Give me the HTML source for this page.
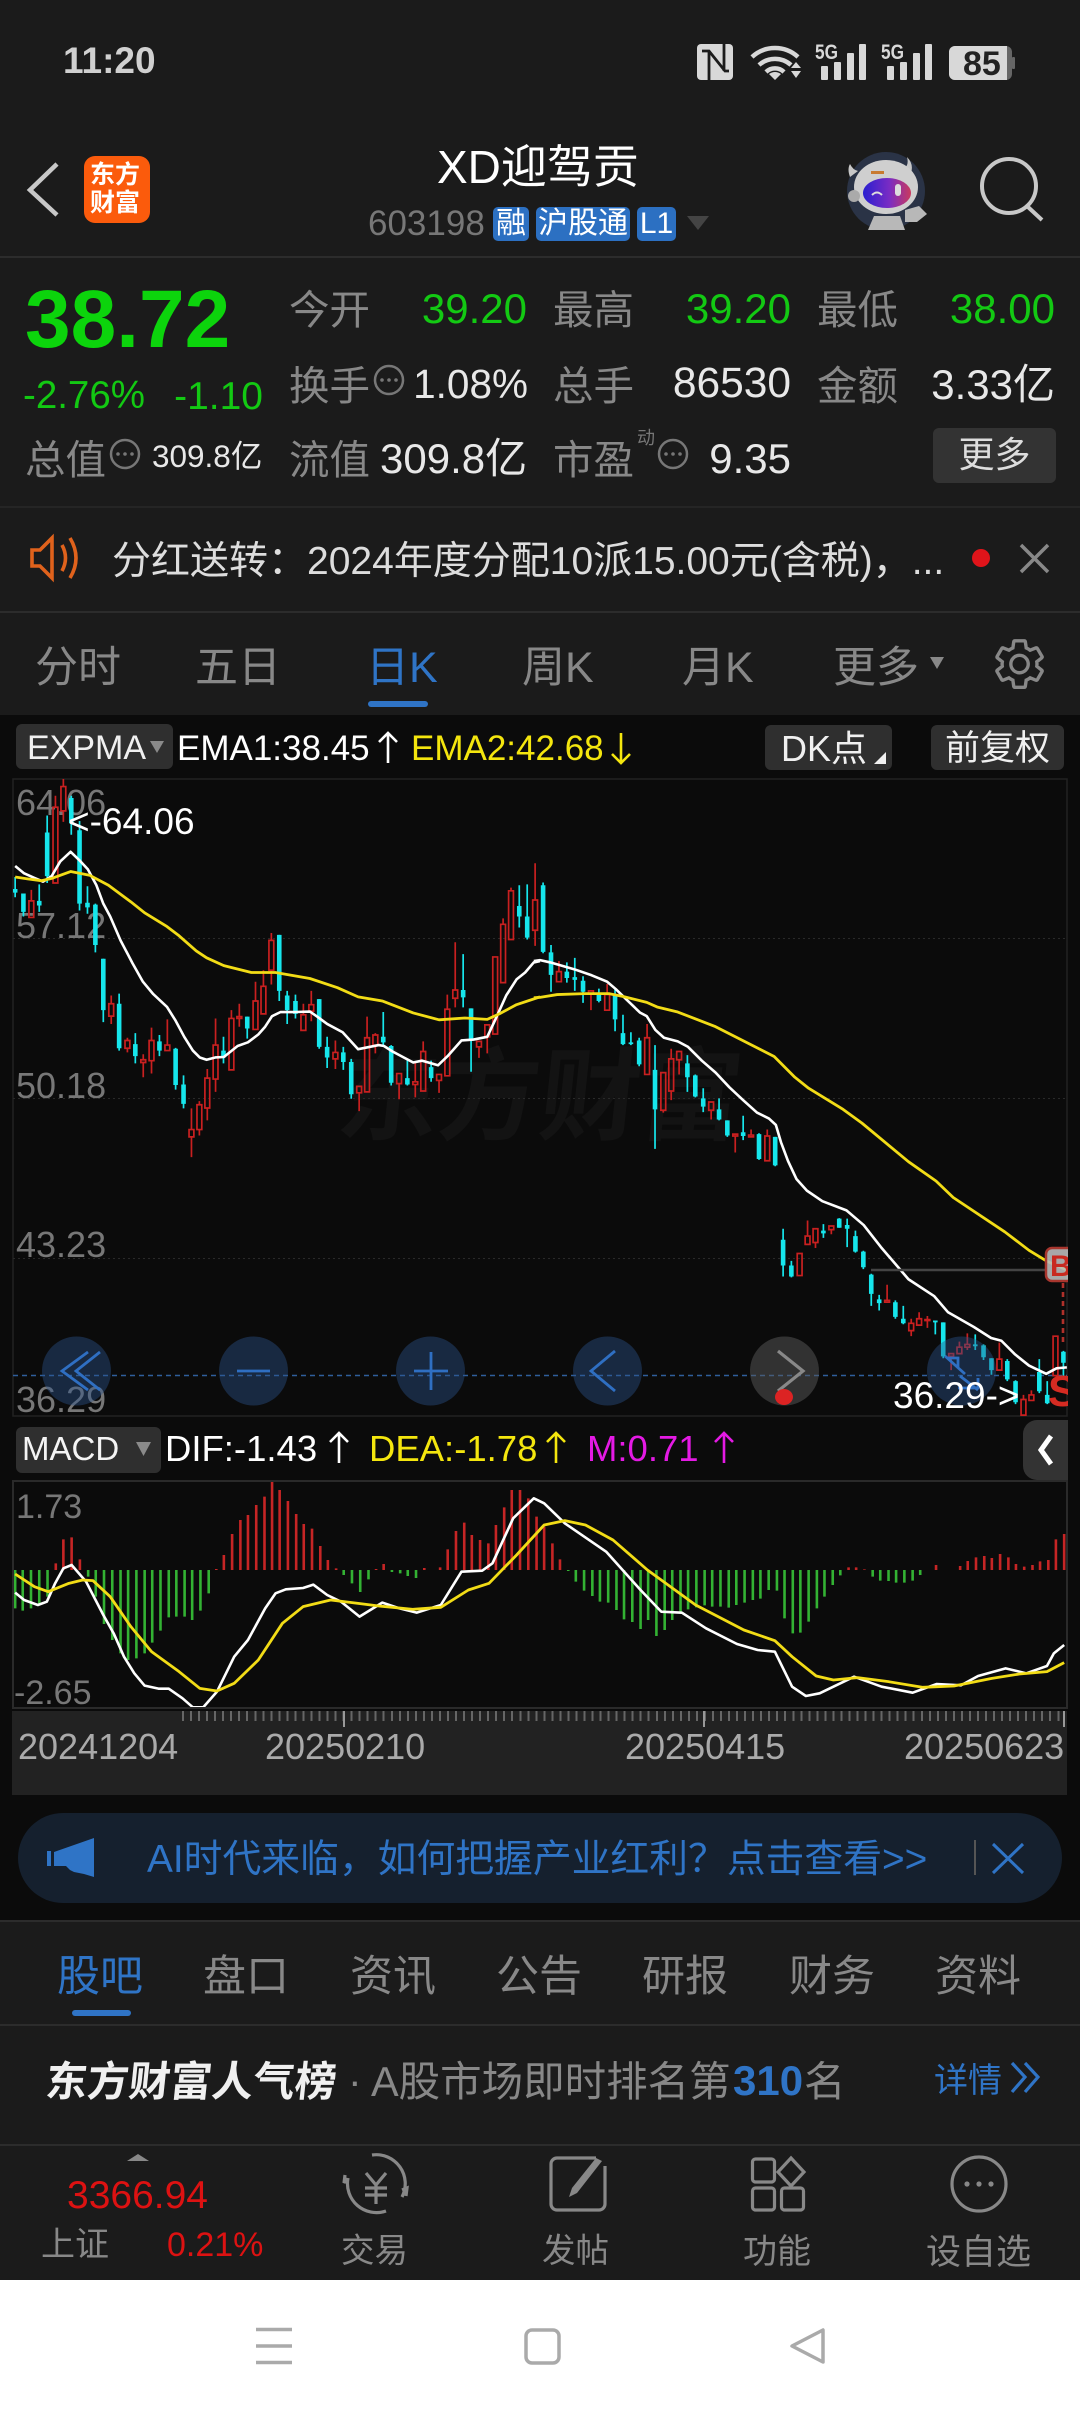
<!DOCTYPE html>
<html lang="zh"><head><meta charset="utf-8"><title>XD迎驾贡</title>
<style>
html,body{margin:0;padding:0;background:#1b1b1b}
#p{position:relative;width:1080px;height:2412px;overflow:hidden;background:#1b1b1b;font-family:"Liberation Sans","Noto Sans CJK SC",sans-serif;color:#888}
.t{position:absolute;white-space:nowrap;line-height:1}
.b{position:absolute}
svg{position:absolute;left:0;top:0}
.g{color:#13c913}.w{color:#e8e8e8}.y{color:#f4e60e}.bl{color:#2f74c6}
</style></head><body><div id="p">

<div class="b" style="left:0;top:715px;width:1080px;height:1205px;background:#0b0b0b"></div>
<div class="b" style="left:0;top:256px;width:1080px;height:2px;background:#2c2c2c"></div>
<div class="b" style="left:0;top:506px;width:1080px;height:2px;background:#252525"></div>
<div class="b" style="left:0;top:611px;width:1080px;height:2px;background:#2c2c2c"></div>
<div class="b" style="left:0;top:1920px;width:1080px;height:2px;background:#2c2c2c"></div>
<div class="b" style="left:0;top:2024px;width:1080px;height:2px;background:#2c2c2c"></div>
<div class="b" style="left:0;top:2144px;width:1080px;height:2px;background:#2c2c2c"></div>
<div class="b" style="left:0;top:2280px;width:1080px;height:132px;background:#fff"></div>

<!-- status bar -->
<span class="t" style="left:63px;top:42px;font-size:37px;font-weight:700;color:#d0d0d0">11:20</span>
<svg width="1080" height="260" viewBox="0 0 1080 260">
<rect x="697" y="44" width="36" height="36" rx="4" fill="#d8d8d8"/>
<path d="M702 51H709L725 71H729M709 51V80M724 44V71" fill="none" stroke="#1b1b1b" stroke-width="2.8"/>
<g fill="none" stroke="#d8d8d8" stroke-width="4.5"><path d="M752 57a34 34 0 0 1 46 0"/><path d="M759 65a24 24 0 0 1 32 0"/><path d="M766 72a13 13 0 0 1 18 0"/></g>
<path d="M769 74l6 6 6-6q-6-4-12 0zM791 68l5-6 5 6zM791 71l5 7 5-7z" fill="#d8d8d8"/>
<g fill="#d8d8d8"><rect x="821" y="66" width="7" height="14" rx="1"/><rect x="834" y="62" width="7" height="18" rx="1"/><rect x="847" y="53" width="7" height="27" rx="1"/><rect x="859" y="44" width="7" height="36" rx="1"/>
<rect x="887" y="66" width="7" height="14" rx="1"/><rect x="900" y="62" width="7" height="18" rx="1"/><rect x="913" y="53" width="7" height="27" rx="1"/><rect x="925" y="44" width="7" height="36" rx="1"/></g>
<text x="815" y="59" font-size="21" font-weight="700" fill="#d8d8d8" font-family="Liberation Sans" textLength="23" lengthAdjust="spacingAndGlyphs">5G</text>
<text x="881" y="59" font-size="21" font-weight="700" fill="#d8d8d8" font-family="Liberation Sans" textLength="23" lengthAdjust="spacingAndGlyphs">5G</text>
<rect x="949" y="46" width="63" height="34" rx="6" fill="#666"/><path d="M955 46h52v34h-52a6 6 0 0 1-6-6V52a6 6 0 0 1 6-6z" fill="#d8d8d8"/><rect x="1012" y="57" width="3" height="12" rx="1" fill="#666"/>
<text x="963" y="75" font-size="34" font-weight="700" fill="#222" font-family="Liberation Sans">85</text>
<!-- back -->
<path d="M57 164L30 190L57 215" fill="none" stroke="#c8c8c8" stroke-width="4.5"/>
<!-- logo -->
<rect x="84" y="156" width="66" height="67" rx="11" fill="#fb5b0c"/>
<!-- avatar -->
<circle cx="886" cy="191" r="39" fill="#2a3346"/>
<path d="M850 177q-3-8 0-13q3 6 8 7zM905 168q4-4 2-11q7 7 4 16z" fill="#c8c8c8"/>
<ellipse cx="886" cy="187" rx="32" ry="27" fill="#cfcfcf"/>
<circle cx="854" cy="196" r="6" fill="#aaa"/>
<defs><linearGradient id="vz" x1="0" x2="1"><stop offset="0" stop-color="#2a1fd0"/><stop offset=".55" stop-color="#7a2cc4"/><stop offset="1" stop-color="#c93a5e"/></linearGradient></defs>
<ellipse cx="887" cy="193" rx="24" ry="15" fill="url(#vz)"/>
<path d="M872 195q5-5 10 0" fill="none" stroke="#ddd" stroke-width="2"/><rect x="895" y="184" width="6" height="12" rx="3" fill="#ddd"/>
<rect x="871" y="171" width="13" height="3" fill="#c87a30"/>
<path d="M868 230l6-14h26l5 14zM905 210l14-4 8 8-10 8-12 0z" fill="#b8b8b8"/>
<!-- search -->
<circle cx="1009" cy="186" r="27" fill="none" stroke="#c8c8c8" stroke-width="4"/><path d="M1028 207L1042 220" stroke="#c8c8c8" stroke-width="4" fill="none"/>
<!-- tri -->
<path d="M687 216h22l-11 14z" fill="#444"/>
</svg>
<span class="t" style="left:90px;top:163px;font-size:25px;font-weight:700;color:#fff">东方</span>
<span class="t" style="left:90px;top:191px;font-size:25px;font-weight:700;color:#fff">财富</span>
<span class="t" style="left:437px;top:144px;font-size:46px;color:#fff">XD迎驾贡</span>
<span class="t" style="left:368px;top:206px;font-size:35px;color:#777">603198</span>
<span class="t" style="left:493px;top:207px;width:36px;height:34px;line-height:34px;text-align:center;background:#2c70c2;border-radius:5px;color:#fff;font-size:30px">融</span>
<span class="t" style="left:536px;top:207px;width:94px;height:34px;line-height:34px;text-align:center;background:#2c70c2;border-radius:5px;color:#fff;font-size:30px">沪股通</span>
<span class="t" style="left:637px;top:207px;width:39px;height:34px;line-height:34px;text-align:center;background:#2c70c2;border-radius:5px;color:#fff;font-size:30px">L1</span>

<!-- quote -->
<span class="t" style="left:25px;top:279px;font-size:82px;font-weight:700;color:#0cd40c">38.72</span>
<span class="t g" style="left:23px;top:377px;font-size:38.500px">-2.76%</span>
<span class="t g" style="right:817px;top:377px;font-size:39px">-1.10</span>
<span class="t" style="left:289px;top:290px;font-size:40.500px">今开</span>
<span class="t g" style="right:553px;top:288px;font-size:42px">39.20</span>
<span class="t" style="left:553px;top:290px;font-size:40.500px">最高</span>
<span class="t g" style="right:289px;top:288px;font-size:42px">39.20</span>
<span class="t" style="left:817px;top:290px;font-size:40.500px">最低</span>
<span class="t g" style="right:25px;top:288px;font-size:42px">38.00</span>
<span class="t" style="left:289px;top:366px;font-size:40.500px">换手</span>
<span class="t w" style="right:552px;top:364px;font-size:40.500px">1.08%</span>
<span class="t" style="left:553px;top:366px;font-size:40.500px">总手</span>
<span class="t w" style="right:289px;top:363px;font-size:42.500px">86530</span>
<span class="t" style="left:817px;top:366px;font-size:40.500px">金额</span>
<span class="t w" style="right:25px;top:364px;font-size:42px">3.33亿</span>
<span class="t" style="left:25px;top:440px;font-size:40.500px">总值</span>
<span class="t w" style="left:152px;top:441px;font-size:31.500px">309.8亿</span>
<span class="t" style="left:289px;top:440px;font-size:40.500px">流值</span>
<span class="t w" style="left:380px;top:438px;font-size:42px">309.8亿</span>
<span class="t" style="left:553px;top:440px;font-size:40.500px">市盈</span>
<span class="t" style="left:637px;top:429px;font-size:18px;color:#777">动</span>
<span class="t w" style="right:289px;top:438px;font-size:42px">9.35</span>
<span class="t" style="left:933px;top:428px;width:123px;height:55px;line-height:54px;background:#333;border-radius:6px;text-align:center;color:#ddd;font-size:36px">更多</span>
<svg width="1080" height="720" viewBox="0 0 1080 720" style="fill:none">
<g stroke="#777" stroke-width="2.5"><circle cx="389" cy="380" r="14"/><circle cx="125" cy="454" r="14"/><circle cx="673" cy="454" r="14"/></g>
<g fill="#777"><circle cx="382" cy="380" r="1.8"/><circle cx="389" cy="380" r="1.8"/><circle cx="396" cy="380" r="1.8"/><circle cx="118" cy="454" r="1.8"/><circle cx="125" cy="454" r="1.8"/><circle cx="132" cy="454" r="1.8"/><circle cx="666" cy="454" r="1.8"/><circle cx="673" cy="454" r="1.8"/><circle cx="680" cy="454" r="1.8"/></g>
<!-- speaker -->
<path d="M32 550h8l12-12v40l-12-12h-8zM62 545q7 13 0 26M70 538q12 20 0 40" stroke="#e0621c" stroke-width="3.6"/>
<circle cx="981" cy="558" r="9" fill="#e0141a"/>
<path d="M1021 545L1048 572M1048 545L1021 572" stroke="#888" stroke-width="3.5"/>
<!-- gear -->
<path transform="translate(990.5 635) scale(2.42)" stroke="#888" stroke-width="1.4" d="M19.14 12.94c.04-.3.06-.61.06-.94 0-.32-.02-.64-.07-.94l2.03-1.58c.18-.14.23-.41.12-.61l-1.92-3.32c-.12-.22-.37-.29-.59-.22l-2.39.96c-.5-.38-1.03-.7-1.62-.94l-.36-2.54c-.04-.24-.24-.41-.48-.41h-3.84c-.24 0-.43.17-.47.41l-.36 2.54c-.59.24-1.13.57-1.62.94l-2.39-.96c-.22-.08-.47 0-.59.22L2.74 8.87c-.12.21-.08.47.12.61l2.03 1.58c-.05.3-.09.63-.09.94s.02.64.07.94l-2.03 1.58c-.18.14-.23.41-.12.61l1.92 3.32c.12.22.37.29.59.22l2.39-.96c.5.38 1.03.7 1.62.94l.36 2.54c.05.24.24.41.48.41h3.84c.24 0 .44-.17.47-.41l.36-2.54c.59-.24 1.13-.56 1.62-.94l2.39.96c.22.08.47 0 .59-.22l1.92-3.32c.12-.22.07-.47-.12-.61l-2.01-1.58zM12 15.6c-1.98 0-3.6-1.62-3.6-3.6s1.62-3.6 3.6-3.6 3.6 1.62 3.6 3.6-1.62 3.6-3.6 3.6z"/>
<path d="M930 657h14l-7 12z" fill="#888"/>
</svg>
<span class="t" style="left:112px;top:542px;font-size:39px;color:#ddd">分红送转：2024年度分配10派15.00元(含税)，...</span>

<!-- tabs -->
<span class="t" style="left:35px;top:647px;font-size:43px">分时</span>
<span class="t" style="left:195px;top:647px;font-size:43px">五日</span>
<span class="t bl" style="left:366px;top:647px;font-size:43px">日K</span>
<span class="t" style="left:522px;top:647px;font-size:43px">周K</span>
<span class="t" style="left:682px;top:647px;font-size:43px">月K</span>
<span class="t" style="left:833px;top:647px;font-size:43px">更多</span>
<div class="b" style="left:368px;top:701px;width:60px;height:6px;border-radius:3px;background:#2f74c6"></div>

<!-- indicator row -->
<span class="t" style="left:16px;top:724px;width:157px;height:45px;background:#2f2f2f;border-radius:6px"></span>
<span class="t" style="left:27px;top:731px;font-size:34px;color:#f0f0f0">EXPMA</span>
<span class="t w" style="left:177px;top:731px;font-size:35px;color:#fff">EMA1:38.45</span>
<span class="t y" style="left:411px;top:731px;font-size:35px">EMA2:42.68</span>
<span class="t" style="left:765px;top:725px;width:127px;height:45px;background:#2f2f2f;border-radius:6px"></span>
<span class="t" style="left:781px;top:731px;font-size:36px;color:#f0f0f0">DK点</span>
<span class="t" style="left:931px;top:725px;width:133px;height:45px;line-height:47px;background:#2f2f2f;border-radius:6px;text-align:center;font-size:35px;color:#f0f0f0">前复权</span>

<!-- watermark -->
<span class="t" style="left:338px;top:1048px;font-size:101px;font-weight:700;color:#131313;transform:skewX(-6deg)">东方财富</span>

<!-- axis labels under candles -->
<span class="t" style="left:16px;top:785px;font-size:36px;color:#777">64.06</span>
<span class="t" style="left:16px;top:908px;font-size:36px;color:#777">57.12</span>
<span class="t" style="left:16px;top:1068px;font-size:36px;color:#777">50.18</span>
<span class="t" style="left:16px;top:1227px;font-size:36px;color:#777">43.23</span>
<span class="t" style="left:16px;top:1382px;font-size:36px;color:#777">36.29</span>

<svg width="1080" height="2412" viewBox="0 0 1080 2412" fill="none">
<defs><clipPath id="ch"><rect x="13" y="779" width="1055" height="637"/></clipPath></defs>
<path d="M150 741h14l-7 12z" fill="#8a8a8a"/>
<path d="M874 764h12v-12z" fill="#f0f0f0"/>
<!-- arrows -->
<g stroke="#fff" stroke-width="2.6"><path d="M388 763V733M379 742L388 733L397 742"/></g>
<g stroke="#f4e60e" stroke-width="2.6"><path d="M621 733V763M612 754L621 763L630 754"/></g>
<!-- frame -->
<rect x="13" y="779" width="1054" height="637" stroke="#222" stroke-width="1.5"/>
<g stroke="#2a2a2a" stroke-width="1" stroke-dasharray="2 3"><path d="M13 938.5H1067M13 1098.5H1067M13 1258.5H1067"/></g>
<path d="M13 1375.5H1067" stroke="#2f5f9c" stroke-width="1.5" stroke-dasharray="5 4"/>

<g clip-path="url(#ch)">
<!-- LEFT half in zoom coords -->
<g transform="translate(0 720) scale(.34435 .45914)">
<path stroke="#16e6ec" stroke-width="1.7" vector-effect="non-scaling-stroke" d="M44 342V386M68 378V428M114 358V418M137 208V355M207 165V250M231 220V415M254 362V422M277 400V506M300 520V658M346 596V720M393 682V748M463 686V732M510 714V805M533 774V846M649 690V748M718 646V694M811 468V612M834 590V662M858 598V650M927 608V716M950 690V758M997 712V762M1020 738V825M1113 636V712M1136 708V796M1183 740V796M1252 742V788M1345 510V626M1368 628V766M1508 360V452M1531 358V478"/>
<path stroke="#16e6ec" stroke-width="4.6" vector-effect="non-scaling-stroke" d="M44 368V376M68 378V418M114 394V404M137 245V340M207 170V225M231 240V400M254 398V408M277 402V490M300 520V632M346 618V715M393 706V732M463 700V720M510 716V795M533 794V836M649 720V735M718 646V672M811 468V590M834 600V632M858 612V640M927 608V712M950 712V735M997 724V745M1020 745V815M1113 690V702M1136 710V790M1183 780V794M1252 756V780M1345 588V604M1368 628V695M1508 405V428M1531 428V474"/>
<path stroke="#c92020" stroke-width="1.7" vector-effect="non-scaling-stroke" d="M91 370V394M84 394h14V430h-14ZM161 165V190M154 190h14V355h-14ZM184 128V145M184 198V222M177 145h14V198h-14ZM323 600V618M323 645V662M316 618h14V645h-14ZM370 692V698M370 715V724M363 698h14V715h-14ZM416 728V740M416 746V778M409 740h14V746h-14ZM440 670V698M440 742V770M433 698h14V742h-14ZM486 652V708M479 708h14V720h-14ZM556 846V892M556 908V952M549 892h14V908h-14ZM579 830V838M579 892V905M572 838h14V892h-14ZM602 760V780M602 845V872M595 780h14V845h-14ZM626 650V708M626 782V810M619 708h14V782h-14ZM672 632V650M665 650h14V762h-14ZM695 618V646M695 650V668M688 646h14V650h-14ZM742 570V612M735 612h14V674h-14ZM765 545V580M758 580h14V640h-14ZM788 464V480M788 545V576M781 480h14V545h-14ZM881 618V642M874 642h14V676h-14ZM904 590V620M904 634V656M897 620h14V634h-14ZM974 698V724M974 738V760M967 724h14V738h-14ZM1043 796V798M1043 812V852M1036 798h14V812h-14ZM1066 646V692M1059 692h14V810h-14ZM1090 682V686M1090 708V726M1083 686h14V708h-14ZM1159 792V826M1152 770h14V792h-14ZM1206 745V788M1206 794V822M1199 788h14V794h-14ZM1229 700V722M1222 722h14V808h-14ZM1275 785V812M1268 772h14V785h-14ZM1299 598V630M1292 630h14V775h-14ZM1322 484V588M1322 606V626M1315 588h14V606h-14ZM1391 712V736M1384 700h14V712h-14ZM1415 690V726M1408 664h14V690h-14ZM1431 516h14V684h-14ZM1461 432V445M1454 445h14V572h-14ZM1484 365V372M1477 372h14V478h-14ZM1554 312V392M1554 458V492M1547 392h14V458h-14Z"/>
<path stroke="#fff" stroke-width="2.6" stroke-linejoin="round" vector-effect="non-scaling-stroke" d="M44 318L70 334 100 344 125 352 150 340 175 308 205 287 230 305 255 325 280 360 300 400 320 428 350 480 385 530 415 570 445 597 485 625 510 655 535 690 560 720 580 735 600 740 625 735 650 734 690 710 720 702 750 685 770 668 790 645 815 636 860 636 900 635 925 648 950 662 995 680 1040 717 1100 708 1115 710 1140 722 1200 746 1225 742 1272 752 1300 732 1340 698 1375 696 1415 690 1440 650 1470 600 1500 565 1525 550 1550 528 1568 525"/>
<path stroke="#f2dc16" stroke-width="2.8" stroke-linejoin="round" vector-effect="non-scaling-stroke" d="M44 342L80 346 120 350 150 345 205 330 260 338 315 360 380 396 420 420 485 450 520 470 570 503 600 518 650 535 730 550 800 550 900 563 980 583 1040 603 1110 612 1200 638 1275 653 1350 649 1415 652 1450 640 1500 620 1568 603"/>
</g>
<!-- RIGHT half -->
<g transform="translate(540 720) scale(.34435 .45914)">
<path stroke="#16e6ec" stroke-width="1.7" vector-effect="non-scaling-stroke" d="M9 354V508M32 490V592M78 528V572M101 518V590M125 558V616M171 585V615M218 585V678M241 642V708M264 680V708M288 692V754M334 708V934M428 730V810M451 772V822M474 802V854M520 824V872M544 872V908M590 862V915M636 900V958M683 908V972M706 1108V1212M730 1178V1214M823 1098V1128M869 1085V1106M892 1086V1148M916 1112V1160M939 1156V1196M962 1206V1276M985 1252V1286M1032 1264V1304M1055 1276V1316M1148 1308V1338M1171 1312V1390M1264 1338V1372M1288 1360V1394M1311 1390V1426M1357 1392V1440M1381 1438V1490M1450 1392V1466M1473 1440V1490M1520 1374V1430"/>
<path stroke="#16e6ec" stroke-width="4.6" vector-effect="non-scaling-stroke" d="M9 360V505M32 506V555M78 548V562M101 560V566M125 568V592M171 598V612M218 600V652M241 682V706M264 702V706M288 698V750M334 762V848M428 748V778M451 774V820M474 824V842M520 848V870M544 872V905M590 898V906M636 902V956M683 908V970M706 1132V1188M730 1188V1212M823 1112V1118M869 1086V1106M892 1100V1108M916 1124V1158M939 1158V1192M962 1208V1250M985 1262V1270M1032 1268V1300M1055 1304V1314M1148 1308V1312M1171 1312V1386M1264 1360V1364M1288 1362V1388M1311 1390V1416M1357 1396V1436M1381 1440V1486M1450 1420V1462M1473 1470V1488M1520 1376V1400"/>
<path stroke="#c92020" stroke-width="1.7" vector-effect="non-scaling-stroke" d="M55 525V548M48 548h14V570h-14ZM148 596V632M141 590h14V596h-14ZM195 575V598M188 598h14V632h-14ZM311 662V692M304 692h14V772h-14ZM358 850V855M351 768h14V850h-14ZM381 716V738M381 808V828M374 738h14V808h-14ZM404 740V772M397 722h14V740h-14ZM497 850V870M490 832h14V850h-14ZM567 906V942M560 902h14V906h-14ZM613 892V904M606 904h14V908h-14ZM660 892V906M653 906h14V960h-14ZM747 1162h14V1210h-14ZM777 1090V1124M770 1124h14V1142h-14ZM800 1138V1150M793 1108h14V1138h-14ZM846 1110V1120M839 1102h14V1110h-14ZM1008 1230V1264M1001 1264h14V1268h-14ZM1078 1304V1314M1078 1330V1342M1071 1314h14V1330h-14ZM1101 1290V1304M1094 1304h14V1318h-14ZM1125 1298V1306M1125 1308V1324M1118 1306h14V1308h-14ZM1194 1386V1416M1187 1380h14V1386h-14ZM1218 1354V1366M1211 1366h14V1380h-14ZM1241 1336V1360M1241 1366V1372M1234 1360h14V1366h-14ZM1334 1356V1392M1327 1392h14V1416h-14ZM1404 1470V1480M1397 1480h14V1514h-14ZM1427 1460V1470M1420 1470h14V1482h-14ZM1490 1342h14V1428h-14Z"/>
<path stroke="#fff" stroke-width="2.6" stroke-linejoin="round" vector-effect="non-scaling-stroke" d="M-18 525L0 523 30 528 100 543 150 556 195 570 220 586 250 608 290 637 310 645 335 675 360 692 400 700 430 712 470 742 510 768 550 800 590 828 630 855 665 868 685 882 700 920 720 960 745 1000 775 1025 820 1048 890 1068 940 1100 990 1148 1070 1218 1145 1255 1185 1290 1260 1322 1310 1346 1340 1352 1380 1382 1420 1406 1470 1424 1500 1412 1530 1410"/>
<path stroke="#f2dc16" stroke-width="2.8" stroke-linejoin="round" vector-effect="non-scaling-stroke" d="M-18 605L0 604 50 598 130 596 200 596 240 602 310 615 340 625 400 636 510 668 680 733 740 778 780 802 880 848 935 878 1070 962 1150 1004 1200 1040 1350 1115 1420 1155 1470 1178 1530 1198"/>
</g>
<!-- highest / B / S -->
<path d="M871 1270H1046" stroke="#444" stroke-width="2.5"/>
<rect x="1046" y="1248" width="30" height="33" rx="6" fill="#b9b9b9" fill-opacity=".9" stroke="#a8362e" stroke-width="2.5"/>
<text x="1050" y="1276" font-size="30" font-weight="700" fill="#c8291f" font-family="Liberation Sans">B</text>
<path d="M1063 1283V1342" stroke="#b0302a" stroke-width="2.6" stroke-dasharray="5 4"/>
<!-- circle buttons -->
<g fill="#2b548c" fill-opacity=".42"><circle cx="76.500" cy="1371" r="34.500"/><circle cx="253.500" cy="1371" r="34.500"/><circle cx="430.500" cy="1371" r="34.500"/><circle cx="607.500" cy="1371" r="34.500"/><circle cx="961.500" cy="1371" r="34.500"/></g>
<circle cx="784.500" cy="1371" r="34.500" fill="#5a5a5a" fill-opacity=".5"/>
<g stroke="#2f6fc2" stroke-width="2.8"><path d="M88 1352L62 1371L88 1390M100 1352L76 1371L100 1390M237 1371H270M414 1371H448M431 1352V1390M615 1351L591 1371L615 1391M947 1358H958V1367M945 1356L965 1374M958 1388H978V1378M960 1376L978 1390" /></g>
<path d="M778 1351L803 1371L778 1391" stroke="#888" stroke-width="3.2"/>
<ellipse cx="784" cy="1397" rx="9" ry="8" fill="#dc2323"/>
<text x="1048" y="1406" font-size="44" font-weight="700" fill="#d52b22" font-family="Liberation Sans">S</text>
</g>

<!-- MACD bars -->
<g transform="translate(0 1420) scale(.68878 .33333)">
<path stroke="#33b233" stroke-width="2.6" vector-effect="non-scaling-stroke" d="M22 450V565M33 450V572M45 450V565M57 450V555M69 450V530M128 450V470M139 450V530M151 450V612M163 450V660M175 450V700M186 450V720M198 450V715M210 450V700M221 450V668M233 450V632M245 450V592M256 450V590M268 450V590M279 450V600M291 450V572M303 450V520M499 450V465M511 450V490M523 450V516M535 450V478M569 450V456M581 450V460M592 450V468M604 450V474M825 450V453M836 450V485M848 450V512M860 450V528M871 450V545M883 450V548M895 450V570M906 450V598M918 450V606M930 450V627M941 450V600M953 450V648M965 450V630M976 450V600M988 450V578M999 450V568M1011 450V562M1023 450V556M1034 450V560M1046 450V560M1058 450V563M1069 450V555M1081 450V548M1093 450V540M1104 450V536M1116 450V510M1128 450V512M1139 450V595M1151 450V640M1162 450V638M1174 450V605M1186 450V565M1197 450V530M1209 450V495M1220 450V466M1267 450V470M1278 450V482M1290 450V483M1301 450V488M1313 450V488M1325 450V482M1336 450V465"/>
<path stroke="#c62525" stroke-width="2.6" vector-effect="non-scaling-stroke" d="M81 450V430M92 450V358M104 450V352M116 450V418M314 450V447M325 450V405M337 450V342M349 450V300M360 450V285M372 450V255M384 450V230M395 450V183M406 450V210M418 450V243M430 450V282M441 450V312M453 450V326M465 450V378M476 450V420M488 450V445M546 450V447M557 450V432M616 450V444M639 450V442M650 450V388M662 450V333M674 450V308M685 450V345M697 450V360M709 450V370M720 450V315M732 450V262M743 450V210M755 450V210M767 450V235M779 450V290M790 450V320M802 450V370M813 450V418M1232 450V442M1243 450V442M1255 450V448M1359 450V435M1394 450V438M1405 450V423M1417 450V412M1429 450V408M1440 450V414M1452 450V402M1464 450V412M1475 450V432M1487 450V440M1499 450V435M1510 450V424M1522 450V420M1533 450V358M1545 450V342"/>
<path stroke="#fff" stroke-width="2.6" stroke-linejoin="round" vector-effect="non-scaling-stroke" d="M22 518L35 540 55 555 68 545 80 490 92 445 104 435 125 485 150 585 165 640 180 710 195 760 210 797 230 806 245 806 265 835 280 862 295 862 315 815 340 710 360 660 385 565 400 520 415 508 440 504 455 494 475 525 495 545 522 590 555 548 580 565 605 578 640 555 670 455 700 452 715 430 745 295 775 235 790 250 820 310 880 395 930 510 960 575 990 578 1025 625 1070 672 1100 690 1125 695 1150 800 1170 828 1190 820 1240 770 1280 800 1325 818 1360 792 1395 796 1420 768 1460 745 1490 760 1520 738 1530 700 1545 675"/>
<path stroke="#f2dc16" stroke-width="2.8" stroke-linejoin="round" vector-effect="non-scaling-stroke" d="M22 462L50 500 70 515 100 490 120 480 135 482 160 530 190 620 220 695 260 755 290 805 315 813 340 790 375 720 410 610 440 560 480 540 520 550 550 558 600 568 640 562 680 510 710 490 750 405 790 315 820 302 850 315 890 360 940 450 1010 555 1080 630 1125 662 1150 710 1185 768 1210 780 1245 773 1290 785 1340 802 1385 798 1440 775 1480 762 1520 755 1545 728"/>
</g>
<rect x="13" y="1481" width="1054" height="227" stroke="#2a2a2a" stroke-width="2"/>
</svg>

<!-- MACD header -->
<span class="t" style="left:16px;top:1427px;width:145px;height:46px;background:#2f2f2f;border-radius:6px"></span>
<span class="t" style="left:22px;top:1432px;font-size:33px;color:#f4f4f4">MACD</span>
<span class="t" style="left:165px;top:1431px;font-size:36.500px;color:#fff">DIF:-1.43</span>
<span class="t y" style="left:369px;top:1431px;font-size:36.500px">DEA:-1.78</span>
<span class="t" style="left:587px;top:1431px;font-size:36.500px;color:#e41ae4">M:0.71</span>
<span class="t" style="left:1023px;top:1420px;width:45px;height:60px;background:#333;border-radius:14px 0 0 14px"></span>
<span class="t" style="left:16px;top:1490px;font-size:34px;color:#777">1.73</span>
<span class="t" style="left:14px;top:1676px;font-size:34px;color:#777">-2.65</span>

<!-- time axis -->
<div class="b" style="left:12px;top:1711px;width:1055px;height:84px;background:#222"></div>
<div class="b" style="left:182px;top:1711px;width:883px;height:10px;background:repeating-linear-gradient(90deg,#666 0 2px,transparent 2px 8.03px)"></div>
<div class="b" style="left:343px;top:1711px;width:2px;height:16px;background:#999"></div>
<div class="b" style="left:703px;top:1711px;width:2px;height:16px;background:#999"></div>
<div class="b" style="left:1063px;top:1711px;width:2px;height:16px;background:#999"></div>
<span class="t" style="left:18px;top:1729px;font-size:36px;color:#aaa">20241204</span>
<span class="t" style="left:265px;top:1729px;font-size:36px;color:#aaa">20250210</span>
<span class="t" style="left:625px;top:1729px;font-size:36px;color:#aaa">20250415</span>
<span class="t" style="left:904px;top:1729px;font-size:36px;color:#aaa">20250623</span>

<!-- on-chart white labels -->
<span class="t" style="left:68px;top:803px;font-size:37px;color:#fff">&lt;-64.06</span>
<span class="t" style="left:893px;top:1377px;font-size:37px;color:#fff">36.29-&gt;</span>

<!-- AI banner -->
<div class="b" style="left:18px;top:1813px;width:1044px;height:90px;border-radius:45px;background:#15202e"></div>
<span class="t bl" style="left:147px;top:1841px;font-size:38.800px">AI时代来临，如何把握产业红利？点击查看&gt;&gt;</span>
<div class="b" style="left:974px;top:1840px;width:2px;height:35px;background:#555"></div>

<!-- tabs 2 -->
<span class="t bl" style="left:57px;top:1956px;font-size:43px">股吧</span>
<span class="t" style="left:203px;top:1956px;font-size:43px">盘口</span>
<span class="t" style="left:350px;top:1956px;font-size:43px">资讯</span>
<span class="t" style="left:496px;top:1956px;font-size:43px">公告</span>
<span class="t" style="left:642px;top:1956px;font-size:43px">研报</span>
<span class="t" style="left:789px;top:1956px;font-size:43px">财务</span>
<span class="t" style="left:935px;top:1956px;font-size:43px">资料</span>
<div class="b" style="left:72px;top:2010px;width:59px;height:6px;border-radius:3px;background:#2f74c6"></div>

<!-- rank row -->
<span class="t" style="left:46px;top:2061px;font-size:41.500px;font-weight:700;color:#f0f0f0;transform:skewX(-6deg)">东方财富人气榜</span>
<span class="t" style="left:348px;top:2061px;font-size:41px">·</span>
<span class="t" style="left:371px;top:2061px;font-size:41.500px">A股市场即时排名第</span>
<span class="t bl" style="left:733px;top:2060px;font-size:42px;font-weight:700">310</span>
<span class="t" style="left:804px;top:2061px;font-size:41.500px">名</span>
<span class="t bl" style="left:934px;top:2064px;font-size:34px">详情</span>

<!-- bottom toolbar -->
<span class="t" style="left:67px;top:2176px;font-size:39px;color:#dd1212">3366.94</span>
<span class="t" style="left:41px;top:2228px;font-size:34px">上证</span>
<span class="t" style="left:167px;top:2228px;font-size:34px;color:#dd1212">0.21%</span>
<span class="t" style="left:341px;top:2235px;font-size:33.500px">交易</span>
<span class="t" style="left:542px;top:2235px;font-size:33.500px">发帖</span>
<span class="t" style="left:743px;top:2235px;font-size:34px">功能</span>
<span class="t" style="left:926px;top:2235px;font-size:35px">设自选</span>

<svg width="1080" height="2412" viewBox="0 0 1080 2412" fill="none">
<!-- macd header triangle, arrows -->
<path d="M136 1442h15l-7.500 14z" fill="#8a8a8a"/>
<g stroke-width="2.6"><path stroke="#fff" d="M339 1463V1433M330 1442L339 1433L348 1442"/><path stroke="#f4e60e" d="M556 1463V1433M547 1442L556 1433L565 1442"/><path stroke="#e41ae4" d="M724 1463V1433M715 1442L724 1433L733 1442"/></g>
<path d="M1051 1436L1041 1450L1051 1464" stroke="#fff" stroke-width="5"/>
<!-- banner icons -->
<path d="M47 1851h4v15h-4zM54 1852L94 1838V1877L84 1874 74 1872 70 1870 66 1866 54 1866z" fill="#2f74c6"/>
<path d="M993 1844L1023 1873M1023 1844L993 1873" stroke="#2f74c6" stroke-width="3"/>
<!-- chevrons -->
<path d="M1012 2063L1025 2077L1012 2092M1025 2063L1038 2077L1025 2092" stroke="#2f74c6" stroke-width="3.2"/>
<path d="M127 2161L138 2154L149 2161z" fill="#888"/>
<!-- 交易 -->
<g stroke="#888" stroke-width="3.2">
<path d="M372 2155a29 29 0 0 1 30 42M386 2211a29 29 0 0 1-38-33"/>
<path d="M402 2190l5-2-1 8M347 2178l-3 5 1-8"/>
<path d="M366 2173l10 12 10-12M376 2185V2204M365 2188H387M365 2195H387"/>
<!-- 发帖 -->
<path d="M596 2158H557a6 6 0 0 0-6 6V2204a6 6 0 0 0 6 6H599a6 6 0 0 0 6-6V2166"/>
<!-- 功能 -->
<rect x="752.500" y="2159" width="22" height="23" rx="3"/><path d="M791 2158L804 2172L791 2186L778 2172Z"/><rect x="752.500" y="2188" width="22" height="22" rx="3"/><rect x="781.500" y="2188" width="22" height="22" rx="3"/>
<!-- 设自选 -->
<circle cx="979" cy="2184" r="27"/>
</g>
<path d="M569 2197L572 2188L596 2158L602 2161L577 2193z" fill="#888"/>
<g fill="#888"><circle cx="967" cy="2184" r="2.600"/><circle cx="979" cy="2184" r="2.600"/><circle cx="991" cy="2184" r="2.600"/></g>
<!-- nav -->
<path d="M256 2329.500H292M256 2346H292M256 2362.500H292" stroke="#aaa" stroke-width="3.500"/>
<rect x="526" y="2330" width="33" height="33" rx="6" stroke="#aaa" stroke-width="3.500"/>
<path d="M823 2330V2362L792 2346Z" stroke="#aaa" stroke-width="3.500" stroke-linejoin="round"/>
</svg>
</div></body></html>
